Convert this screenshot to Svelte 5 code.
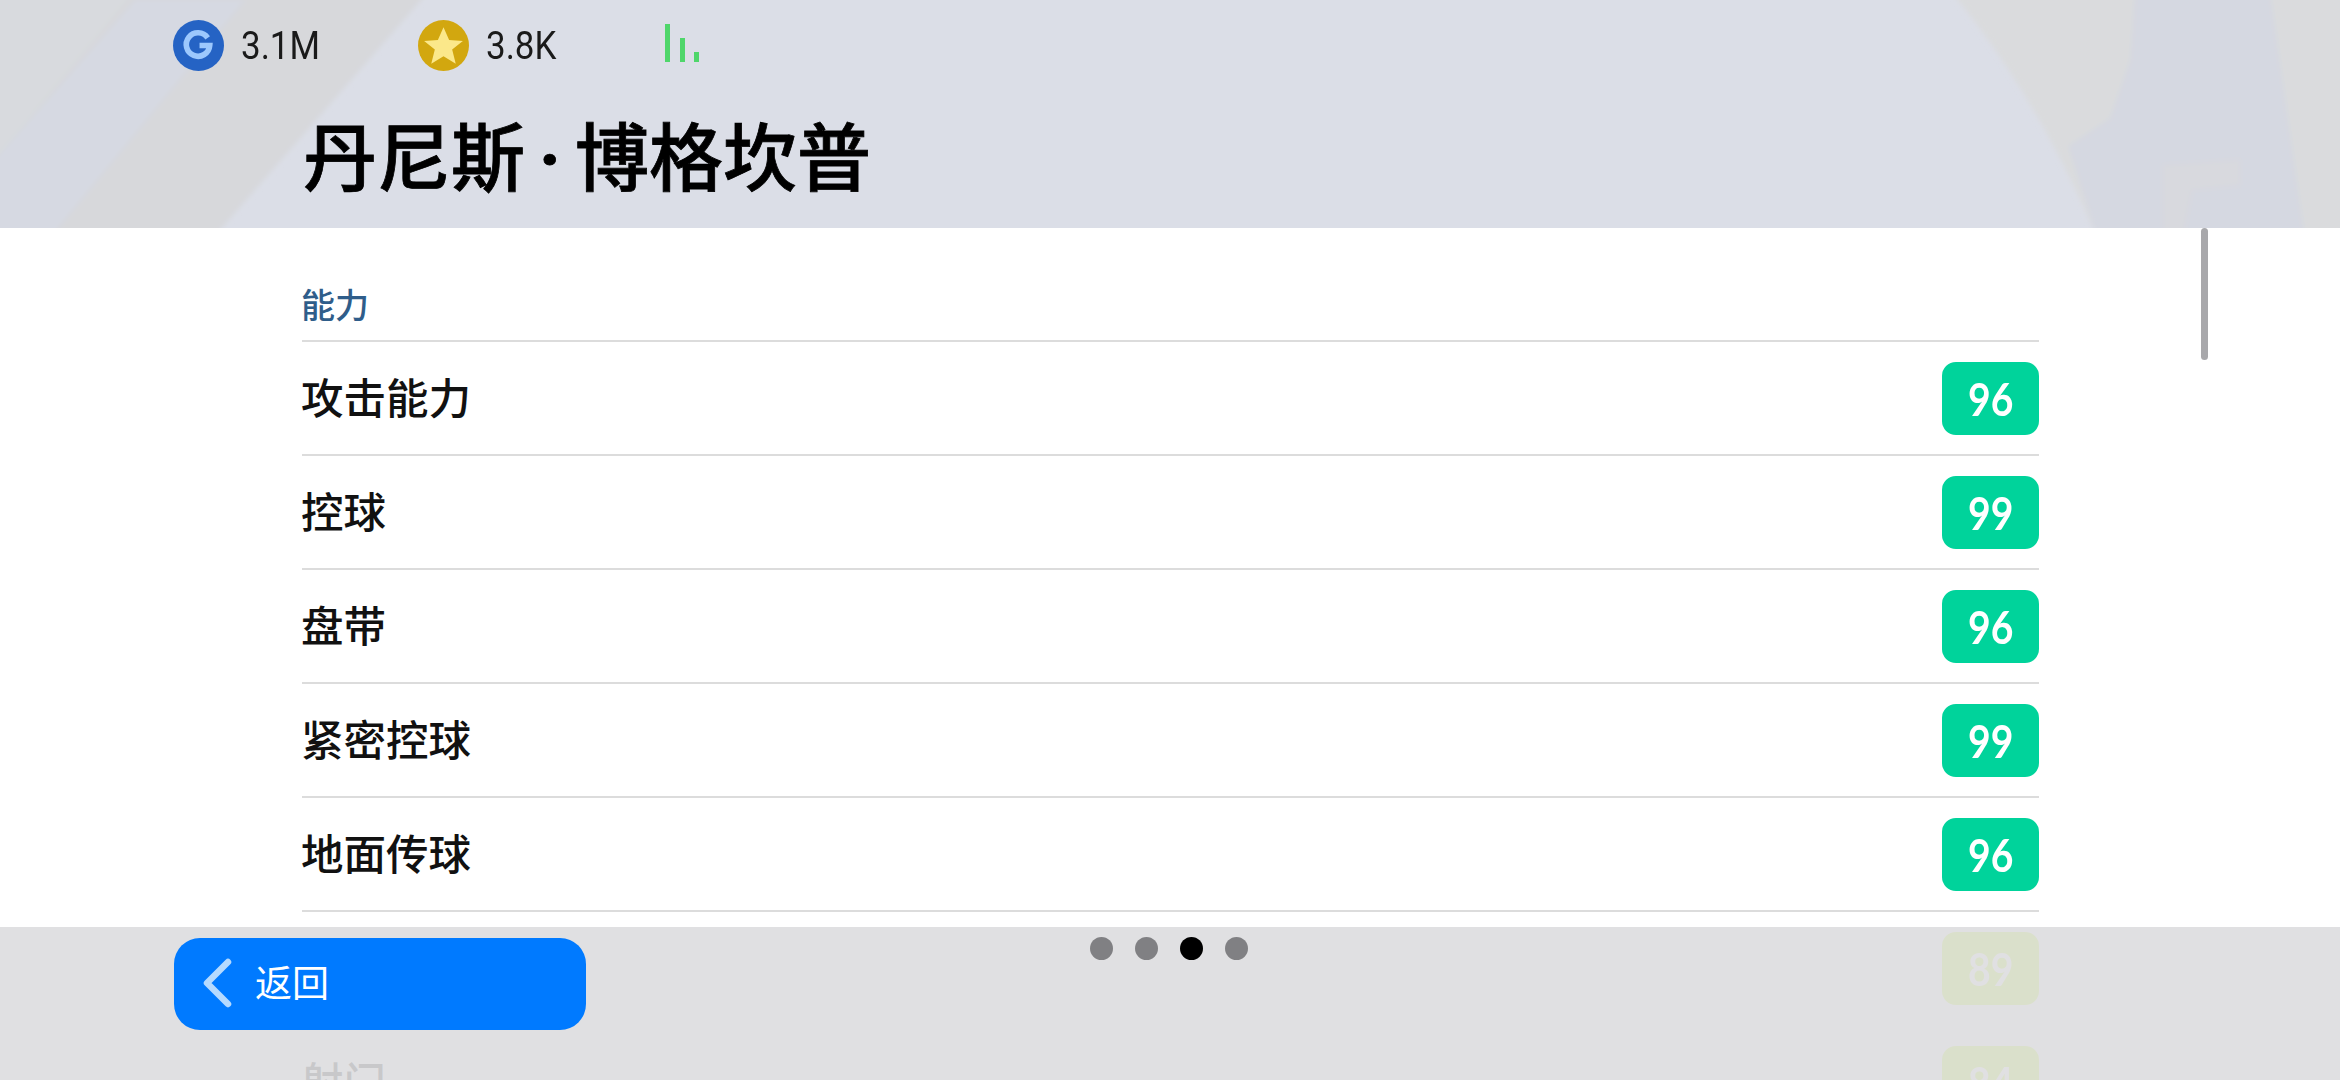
<script>
  const rows = [
    { name: '攻击能力', value: 96 },
    { name: '控球', value: 99 },
    { name: '盘带', value: 96 },
    { name: '紧密控球', value: 99 },
    { name: '地面传球', value: 96 },
    { name: '', value: 89, plain: true },
    { name: '射门', value: 84 }
  ];
  const dots = [false, false, true, false];
</script>

<div class="page">
  <header class="header">
    <svg class="decor" viewBox="0 0 2340 228" preserveAspectRatio="none" aria-hidden="true">
      <defs><filter id="soft"><feGaussianBlur stdDeviation="2.5" /></filter></defs>
      <g filter="url(#soft)">
        <polygon points="-10,-10 430,-10 213,238 -10,238" fill="#d7d8db" />
        <polygon points="-10,-10 135,-10 -10,165" fill="#d8dade" />
        <polygon points="135,0 245,0 50,238 -10,238 -10,165" fill="#d6d9e2" />
        <path d="M1950 -10 Q2040 100 2097 238 L2350 238 L2350 -10 Z" fill="#dadbdd" />
        <polygon points="2135,-10 2270,-10 2305,238 2097,238 2068,146 2110,118 2130,60" fill="#d5d8e1" />
        <polygon points="2163,238 2183,238 2192,190 2240,185 2240,160 2163,165" fill="#d8d9de" />
      </g>
    </svg>
    <div class="status">
      <div class="stat">
        <svg class="coin" viewBox="0 0 50 50"><circle cx="25" cy="25" r="25" fill="#2563c4" /><path d="M34 17.5 A11.5 11.5 0 1 0 36 25 H26" fill="none" stroke="#9cc8fd" stroke-width="5.5" /></svg>
        <span class="amount">3.1M</span>
      </div>
      <div class="stat">
        <svg class="coin" viewBox="0 0 50 50"><circle cx="25" cy="25" r="25" fill="#d2a70f" /><polygon points="25,7 30.5,19.5 44,20.5 33.5,29 37,43 25,35.5 13,43 16.5,29 6,20.5 19.5,19.5" fill="#fbe88a" /></svg>
        <span class="amount">3.8K</span>
      </div>
      <div class="signal">
        <i class="b1"></i><i class="b2"></i><i class="b3"></i>
      </div>
    </div>
    <h1 class="title">丹尼斯<span class="dot">·</span>博格坎普</h1>
  </header>

  <main class="list">
    <div class="section">能力</div>
    {#each rows as row}
      <div class="row" class:plain={row.plain}>
        <span class="label">{row.name}</span>
        <span class="badge" class:lime={row.value < 90}><b>{row.value}</b></span>
      </div>
    {/each}
    <div class="scrollbar"></div>
  </main>

  <footer class="footer">
    <button class="back">
      <svg class="chev" viewBox="0 0 30 50"><path d="M26 4 L5 25 L26 46" fill="none" stroke="#b5daff" stroke-width="6.5" stroke-linecap="round" stroke-linejoin="round" /></svg>
      <span class="back-text">返回</span>
    </button>
    <div class="dots">
      {#each dots as on}
        <i class:on></i>
      {/each}
    </div>
  </footer>
</div>

<style>
  :global(body) {
    margin: 0;
    background: #fff;
  }
  .page {
    position: relative;
    width: 2340px;
    height: 1080px;
    overflow: hidden;
    display: flex;
    flex-direction: column;
    font-family: "Noto Sans CJK SC", "Noto Sans", sans-serif;
    color: #000;
  }
  .header {
    position: relative;
    height: 228px;
    flex: none;
    background: #dbdee7;
    overflow: hidden;
  }
  .decor {
    position: absolute;
    inset: 0;
    width: 100%;
    height: 100%;
  }
  .status {
    position: relative;
    display: flex;
    align-items: center;
    height: 51px;
    padding: 20px 0 0 173px;
  }
  .stat {
    display: flex;
    align-items: center;
    gap: 17px;
    width: 245px;
    font-family: Roboto, sans-serif;
    font-size: 38px;
    color: #1a1a1a;
  }
  .amount {
    display: block;
    transform: scaleX(0.92);
    transform-origin: left center;
  }
  .coin {
    width: 51px;
    height: 51px;
    flex: none;
  }
  .signal {
    display: flex;
    align-items: flex-end;
    gap: 9.5px;
    height: 38px;
    margin: 0 0 5px 2px;
  }
  .signal i {
    display: block;
    width: 5px;
    background: #4fd66b;
  }
  .b1 { height: 38px; }
  .b2 { height: 24px; }
  .b3 { height: 10px; }
  .title {
    position: relative;
    margin: 29px 0 0 303px;
    font-size: 74px;
    line-height: 106px;
    font-weight: 500;
    -webkit-text-stroke: 0.8px #000;
    white-space: nowrap;
  }
  .dot {
    display: inline-block;
    width: 50px;
    text-align: center;
    font-family: Roboto, sans-serif;
    font-weight: 700;
  }
  .list {
    position: relative;
    flex: 1;
    overflow: hidden;
    background: #fff;
    padding: 0 301px 0 302px;
  }
  .section {
    height: 114px;
    box-sizing: border-box;
    padding-top: 52px;
    font-size: 34px;
    font-weight: 500;
    line-height: 48px;
    color: #2f5d8a;
    border-bottom: 2px solid #dcdcdc;
    text-indent: -1px;
  }
  .row {
    display: flex;
    align-items: center;
    justify-content: space-between;
    height: 114px;
    box-sizing: border-box;
    border-bottom: 2px solid #dcdcdc;
  }
  .row.plain {
    border-bottom-color: transparent;
  }
  .label {
    font-size: 42.5px;
    font-weight: 500;
    line-height: 60px;
    color: #111;
    margin: 0 0 4px -1px;
  }
  .badge {
    display: flex;
    align-items: center;
    justify-content: center;
    width: 97px;
    height: 73px;
    border-radius: 14px;
    background: #00d39b;
    color: #fff;
    font-family: Lato, sans-serif;
    font-size: 46px;
    margin-top: 1px;
  }
  .badge b {
    display: block;
    font-weight: 700;
    transform: scaleX(0.85);
  }
  .badge.lime {
    background: #c3ff19;
  }
  .scrollbar {
    position: absolute;
    top: 0;
    left: 2201px;
    width: 7px;
    height: 132px;
    border-radius: 4px;
    background: #a8a8ab;
  }
  .footer {
    position: absolute;
    left: 0;
    right: 0;
    bottom: 0;
    height: 153px;
    background: rgba(221, 221, 223, 0.9);
  }
  .back {
    position: absolute;
    left: 174px;
    top: 11px;
    width: 412px;
    height: 92px;
    display: flex;
    align-items: center;
    gap: 23px;
    padding: 0 0 0 28px;
    box-sizing: border-box;
    border: none;
    border-radius: 26px;
    background: #007aff;
    color: #fff;
    font-family: inherit;
    font-size: 37px;
    font-weight: 400;
  }
  .back-text {
    margin-bottom: 6px;
  }
  .chev {
    width: 30px;
    height: 50px;
    flex: none;
    margin-bottom: 2px;
  }
  .dots {
    position: absolute;
    left: 1090px;
    top: 10px;
    display: flex;
    gap: 22px;
  }
  .dots i {
    display: block;
    width: 23px;
    height: 23px;
    border-radius: 50%;
    background: #808083;
  }
  .dots i.on {
    background: #000;
  }
</style>
